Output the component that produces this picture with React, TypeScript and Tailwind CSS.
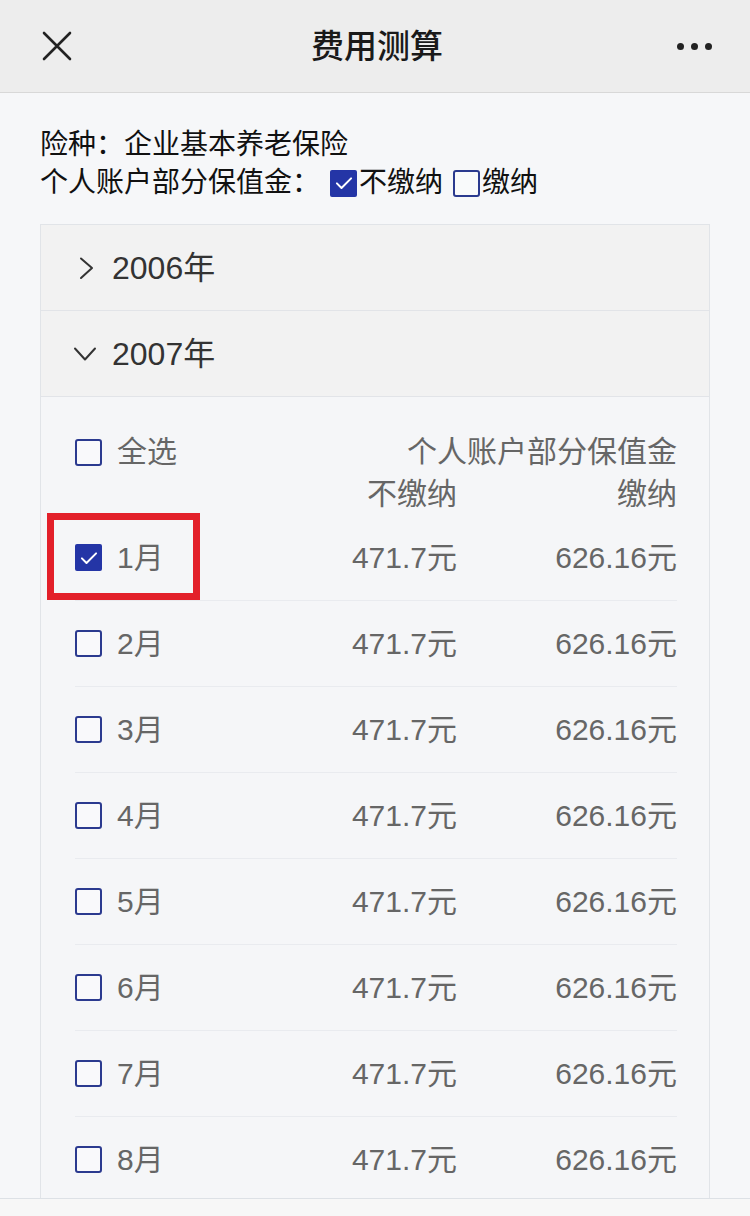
import React from "react";

const months = ["1月", "2月", "3月", "4月", "5月", "6月", "7月", "8月"];

function Box({ checked }: { checked?: boolean }) {
  if (checked) {
    return (
      <span className="flex h-[27px] w-[27px] shrink-0 items-center justify-center rounded-[2px] bg-[#2435a6]">
        <svg width="20" height="20" viewBox="0 0 24 24" fill="none" stroke="white" strokeWidth="2.4" strokeLinecap="round" strokeLinejoin="round">
          <path d="M3.5 12.5l5.5 5.5L20.5 6.5" />
        </svg>
      </span>
    );
  }
  return <span className="block h-[27px] w-[27px] shrink-0 rounded-[3px] border-2 border-[#2b3a8f] bg-white/40" />;
}

function YearRow({ year, open }: { year: string; open?: boolean }) {
  return (
    <div className="flex h-[86px] items-center border-b border-[#e2e4e8] bg-[#f2f2f2] pl-[32px]">
      <svg width="24" height="24" viewBox="0 0 24 24" fill="none" stroke="#333" strokeWidth="2" strokeLinecap="round" strokeLinejoin="round">
        {open ? <path d="M2 6.5l10 11 10-11" /> : <path d="M8 2.5l11 9.5-11 10" />}
      </svg>
      <span className="ml-[15px] text-[32px] leading-none text-[#333]">{year}</span>
    </div>
  );
}

export default function App() {
  return (
    <div
      className="flex h-[1216px] w-[750px] flex-col overflow-hidden bg-[#f6f7f9]"
      style={{ fontFamily: '"Liberation Sans", "Noto Sans CJK SC", sans-serif' }}
    >
      <header className="grid h-[93px] shrink-0 grid-cols-[1fr_auto_1fr] items-center border-b border-[#d8d8d8] bg-[#ededed] pl-[42px] pr-[38px]">
        <svg width="30" height="30" viewBox="0 0 30 30" fill="none" stroke="#222" strokeWidth="2.6" strokeLinecap="round">
          <path d="M2 2l26 26M28 2L2 28" />
        </svg>
        <h1 className="text-[33px] font-medium leading-none text-[#1a1a1a]">费用测算</h1>
        <div className="flex justify-end gap-[7px]">
          <span className="h-[7px] w-[7px] rounded-full bg-[#222]" />
          <span className="h-[7px] w-[7px] rounded-full bg-[#222]" />
          <span className="h-[7px] w-[7px] rounded-full bg-[#222]" />
        </div>
      </header>

      <main className="flex-1 overflow-hidden">
        <div className="px-[40px] pt-[33px] text-[28px] leading-[38px] text-[#111]">
          <p>险种：企业基本养老保险</p>
          <div className="flex items-center">
            <span>个人账户部分保值金：</span>
            <span className="ml-[10px] flex items-center">
              <Box checked />
              <span className="ml-[2px]">不缴纳</span>
            </span>
            <span className="ml-[10px] flex items-center">
              <Box />
              <span className="ml-[2px]">缴纳</span>
            </span>
          </div>
        </div>

        <section className="mx-[40px] mt-[22px] border border-[#e1e4e8]">
          <YearRow year="2006年" />
          <YearRow year="2007年" open />
          <div className="bg-[#f5f6f8] pl-[34px] pr-[32px] pt-[34px] text-[30px] text-[#666]">
            <div className="grid grid-cols-[1fr_200px_220px] leading-[42px]">
              <div className="flex items-center">
                <Box />
                <span className="ml-[15px]">全选</span>
              </div>
              <div className="col-span-2 text-right">个人账户部分保值金</div>
              <div />
              <div className="text-right">不缴纳</div>
              <div className="text-right">缴纳</div>
            </div>
            {months.map((m, i) => (
              <div key={m} className="relative grid h-[86px] grid-cols-[1fr_200px_220px] items-center border-b border-[#e9ebef] leading-none">
                <div className="flex items-center">
                  <Box checked={i === 0} />
                  <span className="ml-[15px]">{m}</span>
                </div>
                <div className="text-right">471.7元</div>
                <div className="text-right">626.16元</div>
                {i === 0 && <div className="absolute left-[-28px] top-[-2px] h-[87px] w-[153px] border-[7px] border-[#e3202a]" />}
              </div>
            ))}
          </div>
        </section>
      </main>

      <div className="h-[18px] shrink-0 border-t border-[#dde1e6] bg-[#f7f7f7]" />
    </div>
  );
}
